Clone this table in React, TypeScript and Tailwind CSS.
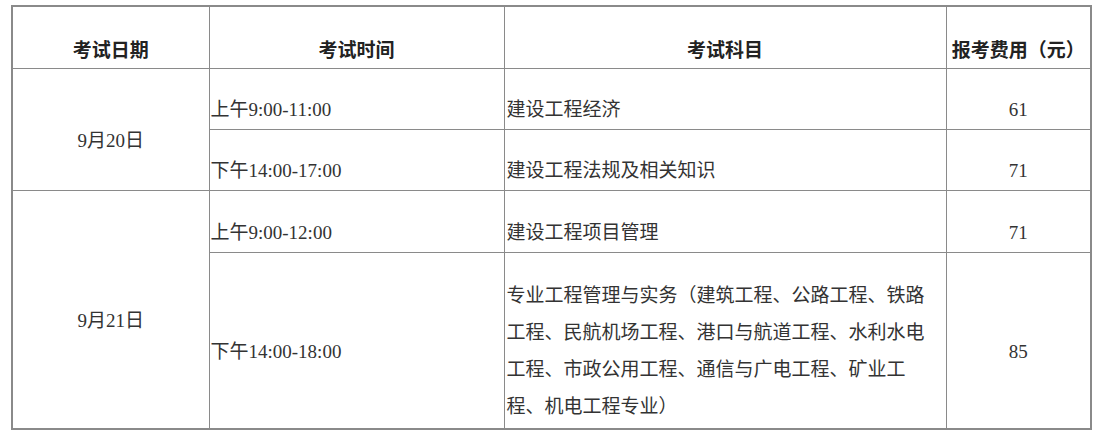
import React from 'react';

interface Row {
  time: string;
  subject: string;
  fee: string;
  h: string;
}

const days: { date: string; rows: Row[] }[] = [
  {
    date: '9月20日',
    rows: [
      { time: '上午9:00-11:00', subject: '建设工程经济', fee: '61', h: 'h-[61px]' },
      { time: '下午14:00-17:00', subject: '建设工程法规及相关知识', fee: '71', h: 'h-[61px]' },
    ],
  },
  {
    date: '9月21日',
    rows: [
      { time: '上午9:00-12:00', subject: '建设工程项目管理', fee: '71', h: 'h-[62px]' },
      {
        time: '下午14:00-18:00',
        subject:
          '专业工程管理与实务（建筑工程、公路工程、铁路工程、民航机场工程、港口与航道工程、水利水电工程、市政公用工程、通信与广电工程、矿业工程、机电工程专业）',
        fee: '85',
        h: 'h-[177px]',
      },
    ],
  },
];

const cell = 'border border-[#8a8a8a] pt-[22px] pb-0 align-middle leading-[37px]';

export default function App() {
  return (
    <div className="bg-white w-[1101px] h-[436px] pt-[5px] pl-[11px] text-[19px] text-[#333] font-['Liberation_Serif','Noto_Sans_CJK_SC',serif]">
      <table className="border-collapse border-2 border-[#8a8a8a] table-fixed w-[1079px]">
        <colgroup>
          <col className="w-[197px]" />
          <col className="w-[295px]" />
          <col className="w-[442px]" />
          <col className="w-[145px]" />
        </colgroup>
        <thead>
          <tr className="h-[62px] font-['Noto_Sans_CJK_SC',sans-serif] font-bold text-[#222]">
            <th className={`${cell} text-center`}>考试日期</th>
            <th className={`${cell} text-center`}>考试时间</th>
            <th className={`${cell} text-center`}>考试科目</th>
            <th className={`${cell} text-center whitespace-nowrap px-0`}>报考费用（元）</th>
          </tr>
        </thead>
        <tbody>
          {days.map((d) =>
            d.rows.map((r, i) => (
              <tr key={d.date + i} className={r.h}>
                {i === 0 && (
                  <td rowSpan={d.rows.length} className={`${cell} text-center`}>
                    {d.date}
                  </td>
                )}
                <td className={`${cell} pl-[1px]`}>{r.time}</td>
                <td className={`${cell} pl-[2px] pr-[10px]`}>{r.subject}</td>
                <td className={`${cell} text-center`}>{r.fee}</td>
              </tr>
            ))
          )}
        </tbody>
      </table>
    </div>
  );
}
